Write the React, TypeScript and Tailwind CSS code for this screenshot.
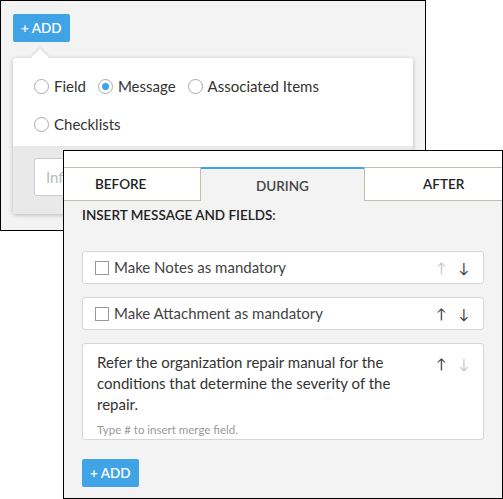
import React from 'react';

const font = { fontFamily: '"Lato", "Open Sans", Arial, sans-serif' };

const Radio: React.FC<{ label: string; checked?: boolean }> = ({ label, checked }) => (
  <label className="flex items-center gap-[5px] text-[15px] leading-[20px] text-[#333]">
    <span className="w-[15px] h-[15px] rounded-full border border-[#aaa] bg-white flex items-center justify-center">
      {checked && <span className="w-[7px] h-[7px] rounded-full bg-[#3fa3e6]" />}
    </span>
    {label}
  </label>
);

const Arrows: React.FC<{ upDim?: boolean; downDim?: boolean }> = ({ upDim, downDim }) => (
  <div className="flex items-center gap-[12px] text-[14px]">
    <span className={upDim ? 'text-[#c4c4c4]' : 'text-[#333]'}>↑</span>
    <span className={downDim ? 'text-[#c4c4c4]' : 'text-[#333]'}>↓</span>
  </div>
);

const FieldRow: React.FC<{ label: string; upDim?: boolean }> = ({ label, upDim }) => (
  <div className="h-[33px] bg-white border border-[#d6d6d6] rounded-[3px] flex items-center pl-[12px] pr-[14px]">
    <span className="w-[14px] h-[14px] border border-[#999] bg-white mr-[5px]" />
    <span className="flex-1 text-[15px] text-[#444]">{label}</span>
    <Arrows upDim={upDim} />
  </div>
);

const App: React.FC = () => {
  return (
    <div className="relative w-[503px] h-[499px] bg-white overflow-hidden" style={font}>
      {/* back panel */}
      <div className="w-[426px] h-[231px] bg-[#f3f3f3] border border-black pl-[12px] pt-[13px]">
        <button className="h-[28px] px-[8px] bg-[#3fa3e6] text-white text-[13.5px] font-semibold rounded-[2px]">+ ADD</button>
        <div className="relative mt-[16px] w-[400px] h-[156px] bg-white rounded-[3px] shadow-[0_1px_4px_rgba(0,0,0,0.25)] flex flex-col">
          <div className="absolute -top-[7px] left-[21px] w-[12px] h-[12px] bg-white rotate-45 shadow-[-1px_-1px_2px_rgba(0,0,0,0.1)]" />
          <div className="relative flex flex-col gap-[18px] px-[21px] pt-[18px] h-[88px]">
            <div className="flex items-center gap-[12px]">
              <Radio label="Field" />
              <Radio label="Message" checked />
              <Radio label="Associated Items" />
            </div>
            <Radio label="Checklists" />
          </div>
          <div className="flex-1 bg-[#e9e9e9] px-[21px] pt-[12px] rounded-b-[3px]">
            <div className="h-[38px] w-[200px] bg-white border border-[#ccc] rounded-[3px] flex items-center px-[11px] text-[15px] text-[#bbb]">Info</div>
          </div>
        </div>
      </div>

      {/* front panel */}
      <div className="absolute left-[63px] top-[150px] w-[440px] h-[349px] bg-[#f3f3f3] border border-black flex flex-col">
        <div className="h-[16px] bg-white" />
        <div className="flex h-[34px] text-[13.5px] font-semibold text-[#222]">
          <div className="w-[137px] bg-white border-t border-b border-r border-[#c4bdb2] pl-[31px] flex items-center">BEFORE</div>
          <div className="w-[163px] border-t-2 border-[#3fa3e6] flex items-center justify-center pt-[3px] text-[#444]">DURING</div>
          <div className="flex-1 bg-white border-t border-b border-l border-[#c4bdb2] pl-[58px] flex items-center">AFTER</div>
        </div>
        <div className="px-[18px] pt-[4px] flex flex-col">
          <div className="text-[13.5px] leading-[20px] font-semibold text-[#222] mb-[26px]">INSERT MESSAGE AND FIELDS:</div>
          <div className="flex flex-col gap-[13px]">
            <FieldRow label="Make Notes as mandatory" upDim />
            <FieldRow label="Make Attachment as mandatory" />
            <div className="h-[97px] bg-white border border-[#d6d6d6] rounded-[3px] pl-[14px] pr-[14px] pt-[8px] flex">
              <div className="flex-1 flex flex-col">
                <p className="w-[300px] text-[15px] leading-[21px] text-[#333]">
                  Refer the organization repair manual for the conditions that determine the severity of the repair.
                </p>
                <p className="mt-[6px] text-[11.5px] text-[#999]">Type # to insert merge field.</p>
              </div>
              <div className="pt-[1px]">
                <Arrows downDim />
              </div>
            </div>
          </div>
          <div className="mt-[19px]">
            <button className="h-[28px] px-[8px] bg-[#3fa3e6] text-white text-[13.5px] font-semibold rounded-[2px]">+ ADD</button>
          </div>
        </div>
      </div>
    </div>
  );
};

export default App;
